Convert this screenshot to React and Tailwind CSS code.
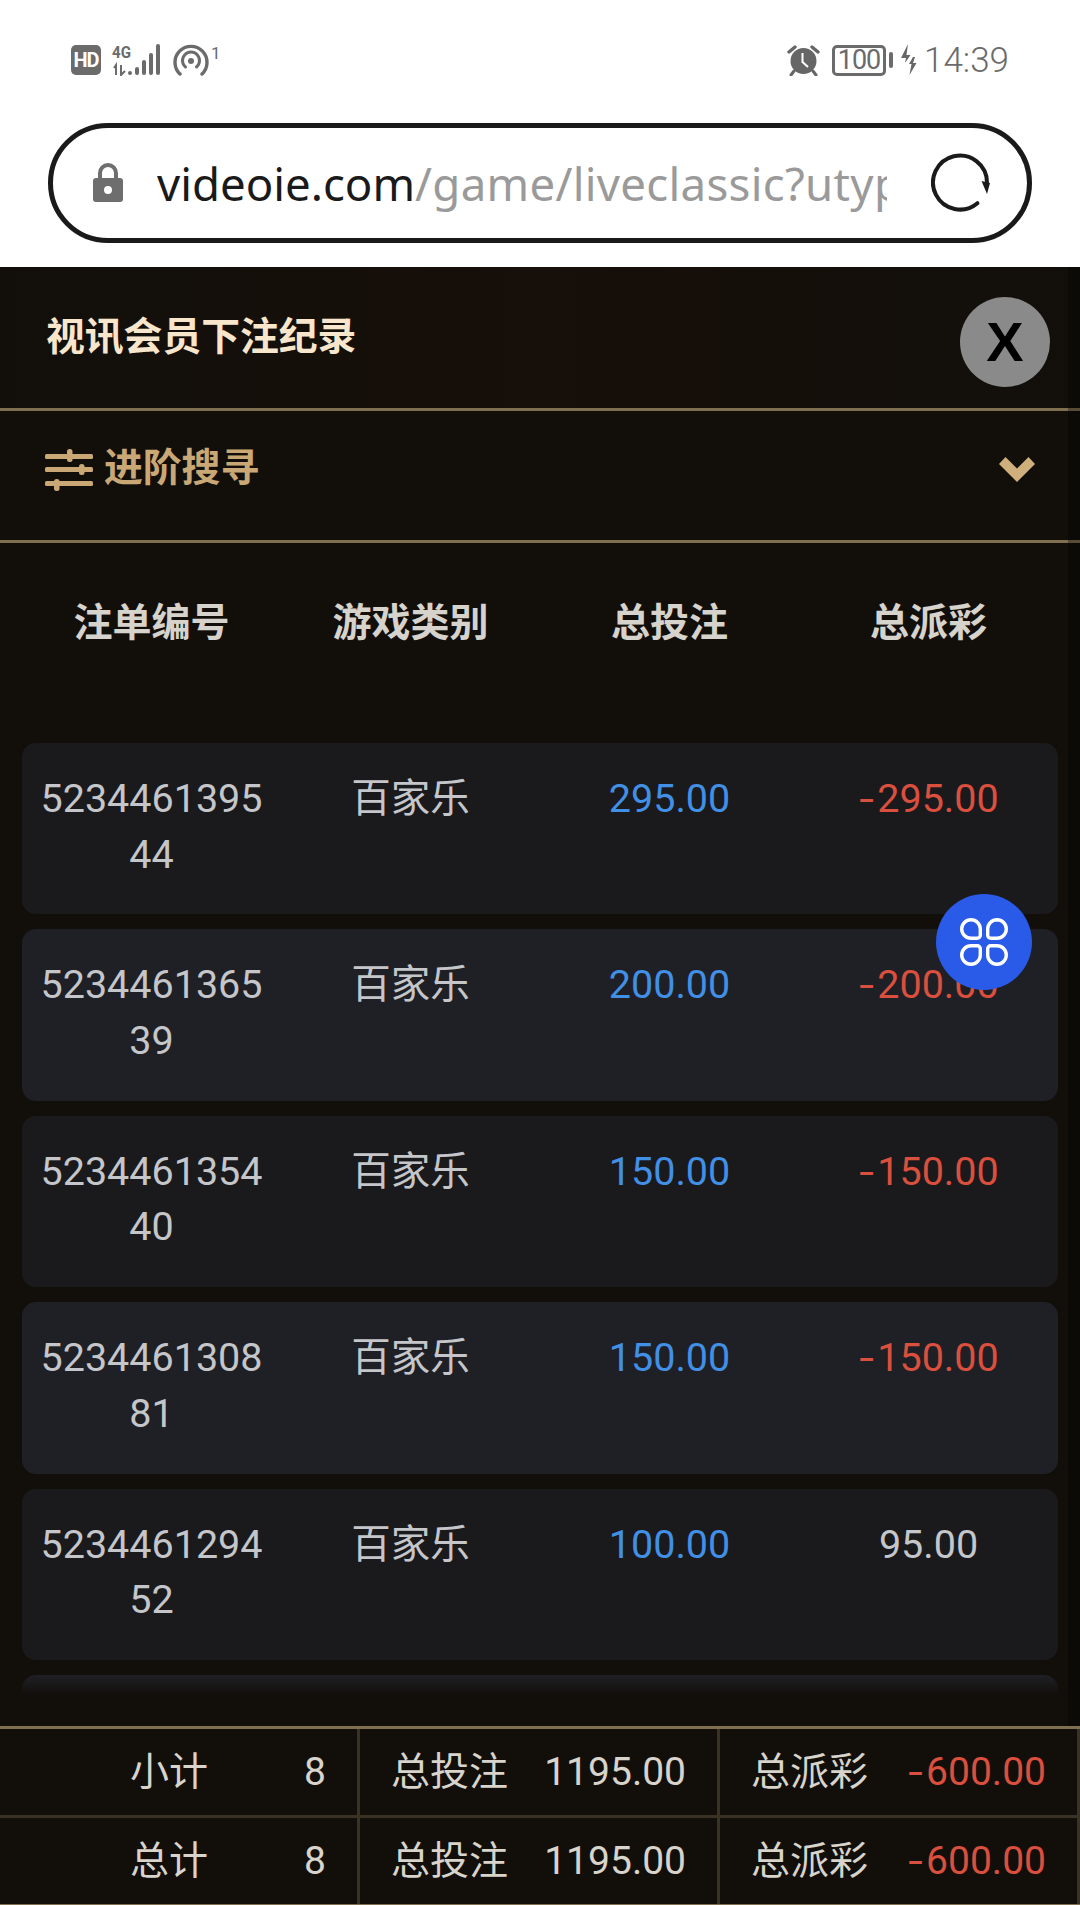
import React from "react";

const FONT = "font-['Roboto','Noto_Sans_CJK_SC',sans-serif]";

const rows = [
  { id: "523446139544", bet: "295.00", pay: "295.00", loss: true },
  { id: "523446136539", bet: "200.00", pay: "200.00", loss: true },
  { id: "523446135440", bet: "150.00", pay: "150.00", loss: true },
  { id: "523446130881", bet: "150.00", pay: "150.00", loss: true },
  { id: "523446129452", bet: "100.00", pay: "95.00", loss: false },
  { id: "523446128000", bet: "100.00", pay: "95.00", loss: false },
];

function Loss({ value }) {
  return (
    <span className="text-[#da4f3d]">
      <span className="ml-[5px] mr-[3px] inline-block origin-right scale-x-[1.35]">-</span>
      {value}
    </span>
  );
}

function Signal() {
  return (
    <svg width="50" height="32" viewBox="0 0 50 32" className="block">
      <text x="0" y="14" fontSize="17" fontWeight="700" fill="#6b6b6b" fontFamily="Roboto, sans-serif" textLength="19" lengthAdjust="spacingAndGlyphs">4G</text>
      <path d="M2 24 L4 21 V31" stroke="#6b6b6b" strokeWidth="2" fill="none" />
      <path d="M9 21 V31 L13 27" stroke="#6b6b6b" strokeWidth="2" fill="none" />
      <rect x="16" y="27" width="4" height="4" rx="2" fill="#6b6b6b" />
      <rect x="23" y="23" width="4" height="8" rx="2" fill="#6b6b6b" />
      <rect x="30" y="16" width="4" height="15" rx="2" fill="#6b6b6b" />
      <rect x="37" y="9" width="4" height="22" rx="2" fill="#6b6b6b" />
      <rect x="44" y="0" width="4" height="31" rx="2" fill="#6b6b6b" />
    </svg>
  );
}

function Hotspot() {
  return (
    <svg width="36" height="32" viewBox="0 0 36 32" fill="none" stroke="#6b6b6b" strokeLinecap="round" className="block">
      <path d="M7 30 A16 16 0 1 1 29 30" strokeWidth="3.4" />
      <path d="M12.5 23 A8.5 8.5 0 1 1 23.5 23" strokeWidth="3" />
      <circle cx="18" cy="17" r="3" fill="#6b6b6b" stroke="none" />
    </svg>
  );
}

function Alarm() {
  return (
    <svg width="33" height="32" viewBox="0 0 33 32" className="block">
      <circle cx="16.5" cy="17" r="13" fill="#666" />
      <path d="M15.5 9 V18 L21 23" stroke="#fff" strokeWidth="2" fill="none" />
      <path d="M2 8 L8 3 M31 8 L25 3" stroke="#666" strokeWidth="3.4" strokeLinecap="round" />
      <path d="M7 27 L4 31 M26 27 L29 31" stroke="#666" strokeWidth="3" strokeLinecap="round" />
    </svg>
  );
}

function Bolt() {
  return (
    <svg width="17" height="32" viewBox="0 0 17 32" className="block" fill="#666">
      <path d="M8 0 L1 14 H6 L5 19 L10.5 11 H6.5 Z" />
      <path d="M13 13 L9 20 H11.5 L9.5 31 L16.5 19 H13 L15 13 Z" />
    </svg>
  );
}

function Lock() {
  return (
    <svg width="30" height="40" viewBox="0 0 30 40" className="block shrink-0">
      <path d="M7 17 V10 A8 8 0 0 1 23 10 V17" fill="none" stroke="#6e6e6e" strokeWidth="4" />
      <path fillRule="evenodd" d="M3 15 H27 A3 3 0 0 1 30 18 V36 A3 3 0 0 1 27 39 H3 A3 3 0 0 1 0 36 V18 A3 3 0 0 1 3 15 Z M15 23 A4 4 0 1 0 15 31 A4 4 0 1 0 15 23 Z" fill="#6e6e6e" />
    </svg>
  );
}

function Refresh() {
  return (
    <svg width="60" height="60" viewBox="0 0 60 60" className="block shrink-0">
      <path d="M46.4 50.2 A27 27 0 1 1 56 29.5" fill="none" stroke="#1a1a1a" strokeWidth="4" strokeLinecap="round" />
      <path d="M50.5 28 L59 30 L56 41 Z" fill="#1a1a1a" />
    </svg>
  );
}

function Sliders() {
  return (
    <svg width="48" height="42" viewBox="0 0 48 42" className="block shrink-0" fill="#c9a876">
      <rect x="0" y="5" width="48" height="5" rx="1.5" />
      <rect x="0" y="18" width="48" height="5" rx="1.5" />
      <rect x="0" y="32" width="48" height="5" rx="1.5" />
      <rect x="22" y="0" width="5.5" height="13" rx="2.5" />
      <rect x="34" y="15" width="5.5" height="11" rx="2.5" />
      <rect x="9" y="30" width="5.5" height="12" rx="2.5" />
    </svg>
  );
}

function Chevron() {
  return (
    <svg width="36" height="25" viewBox="0 0 36 25" className="block" fill="#cfaf7c">
      <path d="M6.5 0 L18 11.5 L29.5 0 L36 7 L18 25 L0 7 Z" />
    </svg>
  );
}

function Petals() {
  return (
    <svg width="48" height="48" viewBox="0 0 48 48" fill="none" stroke="#fff" strokeWidth="3.4" className="block">
      <path d="M11 1.7 A9.3 9.3 0 0 1 20.3 11 V17.3 A3 3 0 0 1 17.3 20.3 H11 A9.3 9.3 0 0 1 11 1.7 Z" />
      <path d="M37 1.7 A9.3 9.3 0 0 1 37 20.3 H30.7 A3 3 0 0 1 27.7 17.3 V11 A9.3 9.3 0 0 1 37 1.7 Z" />
      <path d="M11 46.3 A9.3 9.3 0 0 1 11 27.7 H17.3 A3 3 0 0 1 20.3 30.7 V37 A9.3 9.3 0 0 1 11 46.3 Z" />
      <path d="M37 46.3 A9.3 9.3 0 0 1 27.7 37 V30.7 A3 3 0 0 1 30.7 27.7 H37 A9.3 9.3 0 0 1 37 46.3 Z" />
    </svg>
  );
}

function Row({ row, even }) {
  return (
    <div className={`grid h-[171.4px] shrink-0 grid-cols-4 rounded-[14px] pt-[28px] text-center text-[39.5px] leading-[55.5px] ${even ? "bg-[#1f2025]" : "bg-[#1a1a1d]"}`}>
      <div className="break-all px-4 text-[#c4c6ca]">{row.id}</div>
      <div className="text-[#c4c6ca]">百家乐</div>
      <div className="text-[#428fe6]">{row.bet}</div>
      <div className="text-[#c4c6ca]">{row.loss ? <Loss value={row.pay} /> : row.pay}</div>
    </div>
  );
}

function TotalRow({ label, bordered }) {
  const rowCls = `grid grid-cols-3 text-[39px] text-[#d8d4cc] ${bordered ? "h-[89px] border-b-[3px] border-[#3a3325]" : "h-[86px]"}`;
  const cell = "flex items-center justify-between border-r-[3px] border-[#3a3325] pr-[31px]";
  return (
    <div className={rowCls}>
      <div className={`${cell} pl-[130px]`}>
        <span>{label}</span>
        <span>8</span>
      </div>
      <div className={`${cell} pl-[31px]`}>
        <span>总投注</span>
        <span>1195.00</span>
      </div>
      <div className={`${cell} pl-[31px]`}>
        <span>总派彩</span>
        <Loss value="600.00" />
      </div>
    </div>
  );
}

export default function App() {
  return (
    <div className={`flex h-[1905px] w-[1080px] flex-col overflow-hidden bg-white ${FONT}`}>
      {/* Phone status bar */}
      <div className="mt-[44px] flex h-[32px] items-center justify-between pl-[71px] pr-[71px] text-[#6b6b6b]">
        <div className="flex items-center">
          <div className="flex h-[30px] w-[30px] items-center justify-center rounded-[5px] bg-[#6b6b6b] text-[20px] font-bold tracking-[-1px] text-white">HD</div>
          <div className="ml-[11px]"><Signal /></div>
          <div className="ml-[11px]"><Hotspot /></div>
          <span className="-mt-[14px] ml-[2px] text-[17px] leading-[18px]">1</span>
        </div>
        <div className="flex items-center">
          <Alarm />
          <div className="ml-[12px] flex h-[31px] w-[54px] items-center justify-center rounded-[5px] border-[3px] border-[#6b6b6b] text-[27px] leading-none tracking-[-1px]">100</div>
          <div className="ml-[3px] h-[16px] w-[4px] rounded-[2px] bg-[#6b6b6b]" />
          <div className="ml-[7px]"><Bolt /></div>
          <span className="ml-[7px] text-[35px] font-light leading-none">14:39</span>
        </div>
      </div>

      {/* Browser URL bar */}
      <div className="mx-[48px] mb-[24px] mt-[47px] flex h-[120px] shrink-0 items-center rounded-full border-[5px] border-[#1a1a1a] pl-[40px]">
        <Lock />
        <div className="ml-[34px] w-[730px] overflow-hidden whitespace-nowrap font-['Noto_Sans',sans-serif] text-[45.6px] leading-[60px]">
          <span className="text-[#1a1a1a]">videoie.com</span>
          <span className="tracking-[0.3px] text-[#9a9a9a]">/game/liveclassic?utype=1</span>
        </div>
        <div className="ml-[44px]"><Refresh /></div>
      </div>

      {/* Record panel */}
      <div className="relative flex min-h-0 flex-1 flex-col bg-[#120f0b]">
        <div className="flex h-[144px] shrink-0 items-center justify-between border-b-[3px] border-[#7f6e50] bg-gradient-to-r from-[#120f0b] via-[#170f09] to-[#120f0b] pl-[46px] pr-[30px]">
          <h1 className="text-[38.8px] font-bold leading-none text-[#f7e6cc]">视讯会员下注纪录</h1>
          <button className="mt-[8px] flex h-[90px] w-[90px] items-center justify-center rounded-full bg-[#8a8a8a] font-['Liberation_Sans',sans-serif] text-[56px] font-bold leading-none text-black">X</button>
        </div>

        <div className="flex h-[132px] shrink-0 items-center justify-between border-b-[3px] border-[#7f6e50] pb-[12px] pl-[45px] pr-[45px]">
          <div className="flex items-center">
            <Sliders />
            <span className="-mt-[2px] ml-[11px] text-[38.8px] font-bold leading-none text-[#c9a876]">进阶搜寻</span>
          </div>
          <Chevron />
        </div>

        <div className="mx-[22px] grid h-[160px] shrink-0 grid-cols-4 items-center text-center text-[39px] font-bold text-[#d6d2cc]">
          <div>注单编号</div>
          <div>游戏类别</div>
          <div>总投注</div>
          <div>总派彩</div>
        </div>

        <div className="relative min-h-0 flex-1 overflow-hidden">
          <div className="flex flex-col gap-[15px] px-[22px] pt-[40px]">
            {rows.map((r, i) => (
              <Row key={r.id} row={r} even={i % 2 === 1} />
            ))}
          </div>
          <div className="absolute inset-x-0 bottom-0 h-[51px] bg-gradient-to-b from-[#120f0b00] to-[#120f0b] to-[40%]" />
        </div>

        <div className="shrink-0 border-b-[1px] border-t-[3px] border-[#7f6e50] bg-[#120f0b]">
          <TotalRow label="小计" bordered />
          <TotalRow label="总计" />
        </div>

        {/* Dim strip along the right edge */}
        <div className="pointer-events-none absolute bottom-[179px] right-0 top-0 w-[12px] bg-black/30" />

        {/* Floating action button */}
        <button className="absolute left-[936px] top-[627px] flex h-[96px] w-[96px] items-center justify-center rounded-full bg-[#2a5be8]">
          <Petals />
        </button>
      </div>
    </div>
  );
}
